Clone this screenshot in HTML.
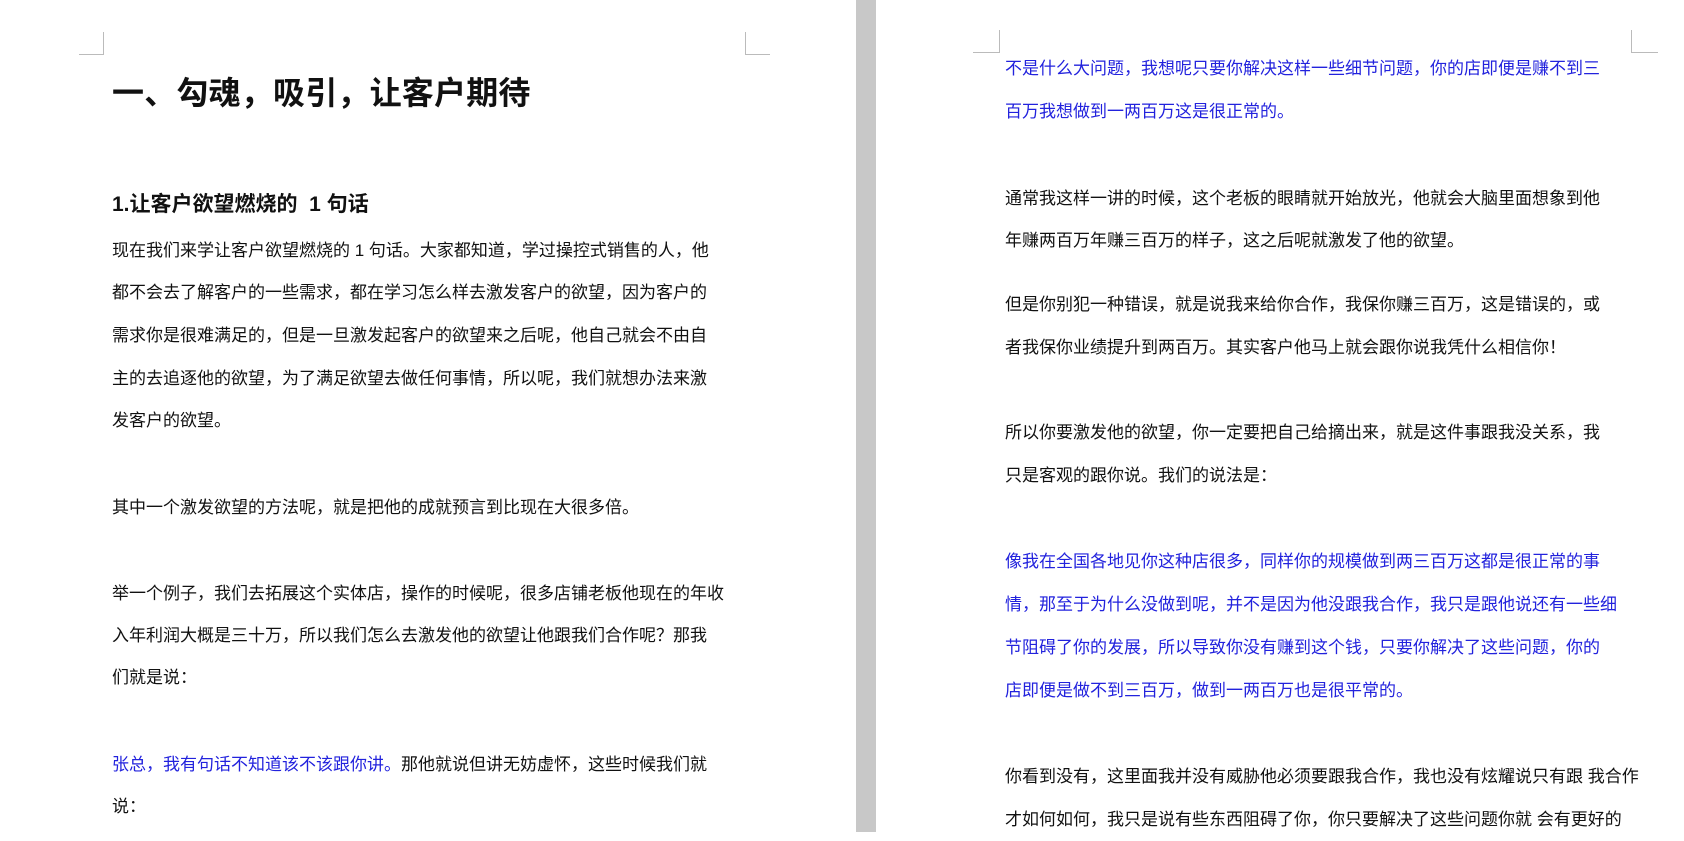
<!DOCTYPE html>
<html><head><meta charset="utf-8"><style>
body{margin:0;width:1684px;height:832px;background:#fff;position:relative;overflow:hidden;font-family:"Liberation Sans","Noto Sans CJK SC",sans-serif;color:#111}
.l{position:absolute;height:42px;line-height:42px;font-size:17px;white-space:nowrap}
.b{color:#2222dd}
.c{position:absolute;border-color:#bbb;border-style:solid;border-width:0}
</style></head><body>
<div style="position:absolute;left:856px;top:0;width:20px;height:832px;background:#c8c8c8"></div>
<div class="c" style="left:79px;top:32px;width:24px;height:22px;border-right-width:1px;border-bottom-width:1px"></div>
<div class="c" style="left:745px;top:32px;width:24px;height:22px;border-left-width:1px;border-bottom-width:1px"></div>
<div class="c" style="left:973px;top:30px;width:26px;height:22px;border-right-width:1px;border-bottom-width:1px"></div>
<div class="c" style="left:1631px;top:30px;width:26px;height:22px;border-left-width:1px;border-bottom-width:1px"></div>

<div class="l" style="left:112px;top:72px;font-size:32px;font-weight:bold;line-height:42px;letter-spacing:0.2px">一、勾魂，吸引，让客户期待</div>
<div class="l" style="left:112px;top:184px;font-size:21px;font-weight:bold">1.让客户欲望燃烧的&nbsp; 1 句话</div>
<div class="l" style="left:112px;top:230px">现在我们来学让客户欲望燃烧的 1 句话。大家都知道，学过操控式销售的人，他</div>
<div class="l" style="left:112px;top:272px">都不会去了解客户的一些需求，都在学习怎么样去激发客户的欲望，因为客户的</div>
<div class="l" style="left:112px;top:315px">需求你是很难满足的，但是一旦激发起客户的欲望来之后呢，他自己就会不由自</div>
<div class="l" style="left:112px;top:358px">主的去追逐他的欲望，为了满足欲望去做任何事情，所以呢，我们就想办法来激</div>
<div class="l" style="left:112px;top:400px">发客户的欲望。</div>
<div class="l" style="left:112px;top:487px">其中一个激发欲望的方法呢，就是把他的成就预言到比现在大很多倍。</div>
<div class="l" style="left:112px;top:573px">举一个例子，我们去拓展这个实体店，操作的时候呢，很多店铺老板他现在的年收</div>
<div class="l" style="left:112px;top:615px">入年利润大概是三十万，所以我们怎么去激发他的欲望让他跟我们合作呢？那我</div>
<div class="l" style="left:112px;top:657px">们就是说：</div>
<div class="l" style="left:112px;top:744px"><span class="b">张总，我有句话不知道该不该跟你讲。</span>那他就说但讲无妨虚怀，这些时候我们就</div>
<div class="l" style="left:112px;top:786px">说：</div>

<div class="l b" style="left:1005px;top:48px">不是什么大问题，我想呢只要你解决这样一些细节问题，你的店即便是赚不到三</div>
<div class="l b" style="left:1005px;top:91px">百万我想做到一两百万这是很正常的。</div>
<div class="l" style="left:1005px;top:178px">通常我这样一讲的时候，这个老板的眼睛就开始放光，他就会大脑里面想象到他</div>
<div class="l" style="left:1005px;top:220px">年赚两百万年赚三百万的样子，这之后呢就激发了他的欲望。</div>
<div class="l" style="left:1005px;top:284px">但是你别犯一种错误，就是说我来给你合作，我保你赚三百万，这是错误的，或</div>
<div class="l" style="left:1005px;top:327px">者我保你业绩提升到两百万。其实客户他马上就会跟你说我凭什么相信你！</div>
<div class="l" style="left:1005px;top:412px">所以你要激发他的欲望，你一定要把自己给摘出来，就是这件事跟我没关系，我</div>
<div class="l" style="left:1005px;top:455px">只是客观的跟你说。我们的说法是：</div>
<div class="l b" style="left:1005px;top:541px">像我在全国各地见你这种店很多，同样你的规模做到两三百万这都是很正常的事</div>
<div class="l b" style="left:1005px;top:584px">情，那至于为什么没做到呢，并不是因为他没跟我合作，我只是跟他说还有一些细</div>
<div class="l b" style="left:1005px;top:627px">节阻碍了你的发展，所以导致你没有赚到这个钱，只要你解决了这些问题，你的</div>
<div class="l b" style="left:1005px;top:670px">店即便是做不到三百万，做到一两百万也是很平常的。</div>
<div class="l" style="left:1005px;top:756px">你看到没有，这里面我并没有威胁他必须要跟我合作，我也没有炫耀说只有跟 我合作</div>
<div class="l" style="left:1005px;top:799px">才如何如何，我只是说有些东西阻碍了你，你只要解决了这些问题你就 会有更好的</div>
</body></html>
